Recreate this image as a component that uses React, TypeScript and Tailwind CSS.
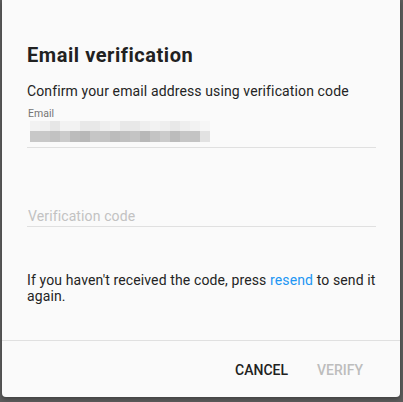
import React from "react";

// pixelated (redacted) email address, top and bottom rows
const topRow = [
  "bg-[#f2f2f2]", "bg-[#f0f0f0]", "bg-[#e6e6e6]", "bg-[#f2f2f2]", "bg-[#f2f2f2]", "bg-[#e8e8e8]",
  "bg-[#e8e8e8]", "bg-[#eeeeee]", "bg-[#f2f2f2]", "bg-[#e8e8e8]", "bg-[#e8e8e8]", "bg-[#eeeeee]",
  "bg-[#f2f2f2]", "bg-[#eeeeee]", "bg-[#e8e8e8]", "bg-[#eeeeee]", "bg-[#f2f2f2]", "bg-[#f6f6f6]",
];
const bottomRow = [
  "bg-[#c8c8c8]", "bg-[#c8c8c8]", "bg-[#c2c2c2]", "bg-[#cbcbcb]", "bg-[#bcbcbc]", "bg-[#b8b8b8]",
  "bg-[#c6c6c6]", "bg-[#c4c4c4]", "bg-[#bcbcbc]", "bg-[#c0c0c0]", "bg-[#c4c4c4]", "bg-[#b8b8b8]",
  "bg-[#c4c4c4]", "bg-[#cbcbcb]", "bg-[#bcbcbc]", "bg-[#c6c6c6]", "bg-[#c4c4c4]", "bg-[#e2e2e2]",
];

const App: React.FC = () => {
  return (
    <div className="h-[402px] w-[403px] bg-[#5c5c5c] pl-[2px] pr-[3px] font-['Roboto',sans-serif]">
      <div className="flex h-[397px] flex-col rounded-b-[4px] bg-[#fafafa] shadow-[0_2px_4px_rgba(0,0,0,0.3)]">
        <div className="pl-[25px] pr-6 pt-[41px]">
          <h2 className="text-[20px] font-bold leading-7 tracking-[0.55px] text-[#212121]">
            Email verification
          </h2>
          <p className="mt-[12px] text-sm leading-5 tracking-[0.12px] text-[#242424]">
            Confirm your email address using verification code
          </p>

          <div className="mt-[7px] border-b border-[#e0e0e0] pb-[5px]">
            <label className="block pl-[1px] text-[10.5px] leading-[12px] text-[#757575]">Email</label>
            <div className="mt-[1px] ml-[3px] flex flex-col">
              <div className="flex h-[10px]">
                {topRow.map((c, i) => (
                  <div key={i} className={`h-full w-[10px] ${c}`} />
                ))}
              </div>
              <div className="flex h-[11px]">
                {bottomRow.map((c, i) => (
                  <div key={i} className={`h-full w-[10px] ${c}`} />
                ))}
              </div>
            </div>
          </div>

          <div className="mt-[58px] border-b border-[#e0e0e0]">
            <input
              className="block h-5 w-full bg-transparent pl-[1px] text-sm leading-5 tracking-[0.12px] text-[#212121] outline-none placeholder:text-[#c2c2c2]"
              placeholder="Verification code"
            />
          </div>

          <p className="mt-[45px] text-sm leading-4 tracking-[0.12px] text-[#242424]">
            If you haven't received the code, press{" "}
            <span className="text-[#2196f3]">resend</span> to send it again.
          </p>
        </div>

        <div className="mt-auto flex h-[57px] items-start justify-end gap-[29px] border-t border-[#e0e0e0] pr-[37px] pt-[19px] text-sm font-medium leading-5">
          <button className="text-[#212121]">CANCEL</button>
          <button className="text-[#bdbdbd]" disabled>
            VERIFY
          </button>
        </div>
      </div>
    </div>
  );
};

export default App;
